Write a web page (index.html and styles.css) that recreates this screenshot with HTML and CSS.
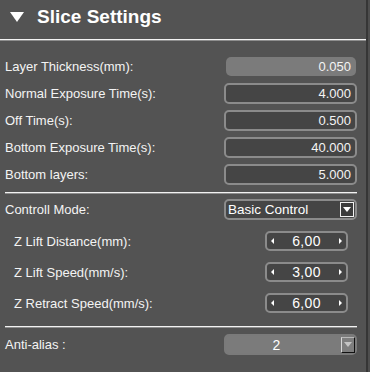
FILE: index.html
```html
<!DOCTYPE html>
<html>
<head>
<meta charset="utf-8">
<link rel="stylesheet" href="styles.css">
</head>
<body>
<div class="panel">
  <div class="header">
    <span class="tri"></span>
    <h1 class="title">Slice Settings</h1>
  </div>
  <div class="rule rule-top"></div>

  <div class="section s1">
    <div class="row">
      <span class="label">Layer Thickness(mm):</span>
      <span class="field field-disabled">0.050</span>
    </div>
    <div class="row">
      <span class="label">Normal Exposure Time(s):</span>
      <span class="field">4.000</span>
    </div>
    <div class="row">
      <span class="label">Off Time(s):</span>
      <span class="field">0.500</span>
    </div>
    <div class="row">
      <span class="label">Bottom Exposure Time(s):</span>
      <span class="field">40.000</span>
    </div>
    <div class="row">
      <span class="label">Bottom layers:</span>
      <span class="field">5.000</span>
    </div>
  </div>

  <div class="rule rule-sec"></div>

  <div class="section s2">
    <div class="row">
      <span class="label">Controll Mode:</span>
      <span class="combo">
        <span class="combo-text">Basic Control</span>
        <span class="combo-btn"><span class="down"></span></span>
      </span>
    </div>
    <div class="row row-spin">
      <span class="label sub">Z Lift Distance(mm):</span>
      <span class="spin"><span class="arr-l"></span><span class="spin-val">6,00</span><span class="arr-r"></span></span>
    </div>
    <div class="row row-spin">
      <span class="label sub">Z Lift Speed(mm/s):</span>
      <span class="spin"><span class="arr-l"></span><span class="spin-val">3,00</span><span class="arr-r"></span></span>
    </div>
    <div class="row row-spin">
      <span class="label sub">Z Retract Speed(mm/s):</span>
      <span class="spin"><span class="arr-l"></span><span class="spin-val">6,00</span><span class="arr-r"></span></span>
    </div>
  </div>

  <div class="rule rule-sec"></div>

  <div class="section s3">
    <div class="row">
      <span class="label">Anti-alias :</span>
      <span class="combo combo-disabled">
        <span class="combo-text centered">2</span>
        <span class="combo-btn btn-disabled"><span class="down down-dis"></span></span>
      </span>
    </div>
  </div>
</div>
</body>
</html>
```
FILE: styles.css
```css
html, body {
  margin: 0;
  padding: 0;
}
body {
  width: 370px;
  height: 372px;
  background: #4e4e4e;
  font-family: "Liberation Sans", Arial, sans-serif;
  font-size: 13px;
  color: #f4f4f4;
  overflow: hidden;
}
.panel {
  width: 366px;
  height: 372px;
  background: #535353;
  border-right: 2px solid #363636;
  box-sizing: content-box;
}
.header {
  display: flex;
  align-items: flex-start;
  padding: 5px 0 10px 10px;
  height: 24px;
}
.tri {
  width: 0;
  height: 0;
  margin-top: 7px;
  border-left: 7px solid transparent;
  border-right: 7px solid transparent;
  border-top: 10px solid #ffffff;
}
.title {
  margin: 0 0 0 13px;
  font-size: 19px;
  line-height: 24px;
  font-weight: bold;
  color: #ffffff;
}
.rule {
  height: 1px;
  background: #f2f2f2;
  border-bottom: 1px solid #8e8e8e;
}
.rule-sec {
  margin: 0 9px 0 5px;
}
.section {
  display: flex;
  flex-direction: column;
  padding-left: 5px;
  padding-right: 9px;
}
.s1 {
  padding-top: 15px;
  padding-bottom: 7px;
  gap: 6px;
}
.s2 {
  padding-top: 5px;
  padding-bottom: 13px;
  gap: 11px;
}
.s3 {
  padding-top: 6px;
}
.row {
  display: flex;
  align-items: center;
  justify-content: space-between;
  height: 21px;
}
.row-spin {
  height: 20px;
}
.label {
  white-space: nowrap;
}
.sub {
  padding-left: 9px;
}
.field {
  box-sizing: border-box;
  width: 133px;
  height: 21px;
  border: 2px solid #8b8b8b;
  border-radius: 5px;
  background: #454545;
  text-align: right;
  padding-right: 4px;
  line-height: 17px;
}
.field-disabled {
  width: 130px;
  height: 19px;
  margin-right: 1px;
  border: none;
  background: #7b7b7b;
  padding-right: 5px;
  line-height: 19px;
}
.combo {
  box-sizing: border-box;
  width: 133px;
  height: 21px;
  border: 2px solid #8b8b8b;
  border-radius: 5px;
  background: #454545;
  display: flex;
  align-items: center;
  padding-left: 2px;
}
.combo-text {
  flex: 1;
  color: #ffffff;
  font-size: 13.5px;
}
.combo-text.centered {
  text-align: center;
  padding-right: 16px;
  font-size: 14px;
}
.combo-btn {
  box-sizing: border-box;
  width: 14px;
  height: 15px;
  margin-right: 1px;
  border: 1px solid #f0f0f0;
  background: #3c3c3c;
  display: flex;
  align-items: center;
  justify-content: center;
}
.down {
  width: 0;
  height: 0;
  border-left: 4px solid transparent;
  border-right: 4px solid transparent;
  border-top: 5px solid #ffffff;
}
.combo-disabled {
  border-color: #7a7a7a;
  background: #7b7b7b;
}
.btn-disabled {
  height: 16px;
  margin-right: 0;
  background: #7e7e7e;
  border-top: 1px solid #b8b8b8;
  border-left: 1px solid #d8d8d8;
  border-right: 1px solid #111111;
  border-bottom: 1px solid #111111;
}
.down-dis {
  border-top-color: #c4c4c4;
}
.spin {
  box-sizing: border-box;
  width: 83px;
  height: 20px;
  margin-right: 9px;
  border: 2px solid #8b8b8b;
  border-radius: 5px;
  background: #454545;
  display: flex;
  align-items: center;
  justify-content: space-between;
  padding: 0 4px 0 4px;
}
.spin-val {
  font-size: 14px;
  letter-spacing: 0.3px;
  color: #ffffff;
}
.arr-l {
  width: 0;
  height: 0;
  border-top: 3px solid transparent;
  border-bottom: 3px solid transparent;
  border-right: 3px solid #ffffff;
}
.arr-r {
  width: 0;
  height: 0;
  border-top: 3px solid transparent;
  border-bottom: 3px solid transparent;
  border-left: 3px solid #ffffff;
}
```
